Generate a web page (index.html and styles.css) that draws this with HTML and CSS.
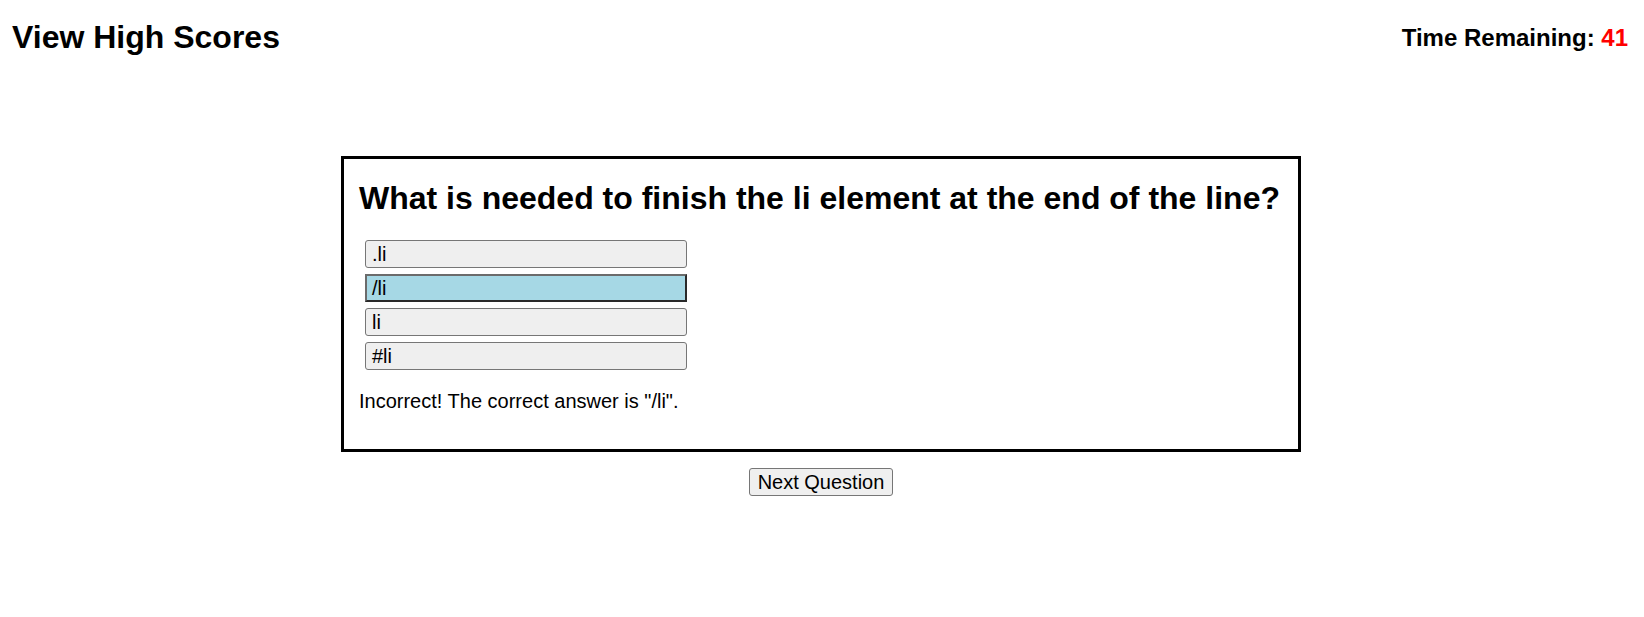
FILE: index.html
```html
<!DOCTYPE html>
<html lang="en">
<head>
<meta charset="utf-8">
<title>Code Quiz</title>
<link rel="stylesheet" href="styles.css">
</head>
<body>
<header class="topbar">
  <h1 class="highscores">View High Scores</h1>
  <h2 class="timer">Time Remaining: <span class="time-left">41</span></h2>
</header>
<main class="quiz">
  <section class="card">
    <h2 class="question">What is needed to finish the li element at the end of the line?</h2>
    <div class="options">
      <button class="option">.li</button>
      <button class="option option-selected">/li</button>
      <button class="option">li</button>
      <button class="option">#li</button>
    </div>
    <p class="feedback">Incorrect! The correct answer is "/li".</p>
  </section>
  <button class="next">Next Question</button>
</main>
</body>
</html>
```

FILE: styles.css
```css
html, body {
  margin: 0;
  padding: 0;
  background: #ffffff;
}

body {
  font-family: "Liberation Sans", Arial, sans-serif;
  font-size: 20px;
  color: #000000;
}

.topbar {
  display: flex;
  justify-content: space-between;
  align-items: center;
  padding: 19px 16px 0 12px;
}

.highscores {
  margin: 0;
  font-size: 32px;
  font-weight: bold;
}

.timer {
  margin: 0;
  font-size: 24px;
  font-weight: bold;
}

.time-left {
  color: #ff0000;
}

.quiz {
  display: flex;
  flex-direction: column;
  align-items: center;
  margin-top: 100px;
  padding-right: 2px;
}

.card {
  box-sizing: border-box;
  width: 960px;
  border: 3px solid #000000;
  padding: 0 15px 16px 15px;
}

.question {
  margin: 21px 0 23px 0;
  font-size: 32px;
  font-weight: bold;
  white-space: nowrap;
}

.options {
  display: flex;
  flex-direction: column;
  gap: 6px;
  margin-left: 6px;
}

.option {
  box-sizing: border-box;
  width: 322px;
  height: 28px;
  padding: 0 6px;
  text-align: left;
  font-family: "Liberation Sans", Arial, sans-serif;
  font-size: 20px;
  color: #000000;
  background: #efefef;
  border: 1px solid #767676;
  border-radius: 3px;
}

.option-selected {
  background: #a6d8e5;
  border: 2px solid #2a2a2a;
  border-top-color: #6b6b6b;
  border-left-color: #6b6b6b;
  border-radius: 0;
  padding: 0 5px;
}

.feedback {
  margin: 20px 0 20px 0;
  font-size: 20px;
}

.next {
  box-sizing: border-box;
  margin-top: 16px;
  height: 28px;
  padding: 0 8px;
  font-family: "Liberation Sans", Arial, sans-serif;
  font-size: 20px;
  color: #000000;
  background: #efefef;
  border: 1px solid #767676;
  border-radius: 3px;
}
```
